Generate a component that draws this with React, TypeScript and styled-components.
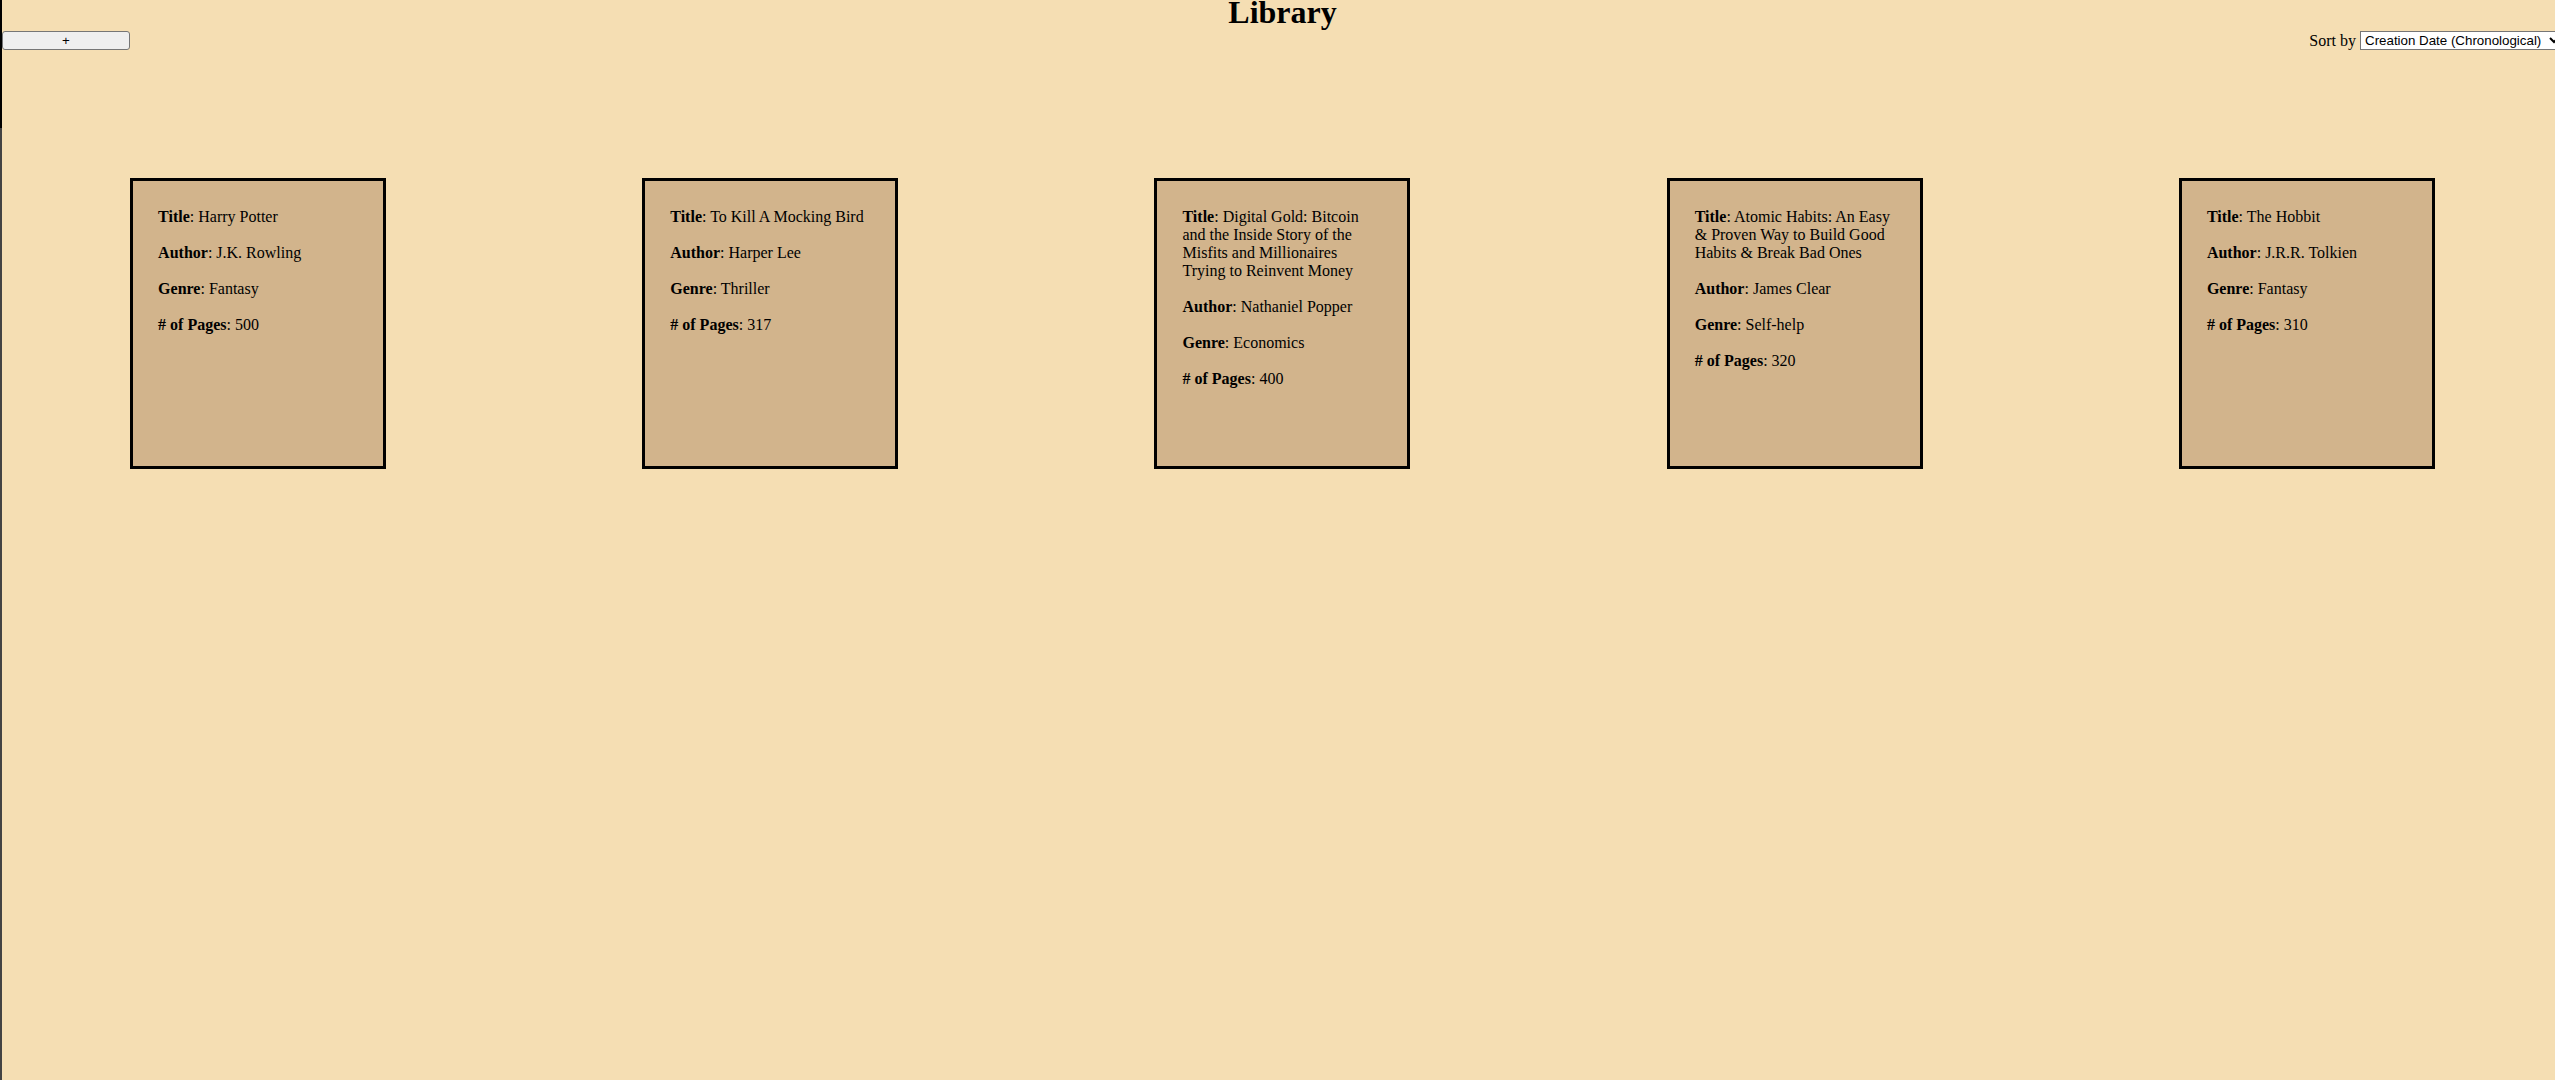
import React from "react";
import styled, { createGlobalStyle } from "styled-components";

const GlobalStyle = createGlobalStyle`
  html, body {
    margin: 0;
    padding: 0;
    overflow: hidden;
    background: #f5deb3;
  }
  body {
    font-family: "Liberation Serif", "Times New Roman", serif;
    font-size: 16px;
    color: #000;
  }
`;

const Page = styled.div`
  display: flex;
  flex-direction: row;
  min-height: 100vh;
  width: 2563px;
  background: #f5deb3;
`;

const Edge = styled.div`
  flex: 0 0 2px;
  width: 2px;
  background: linear-gradient(to bottom, #000 0, #000 128px, #434343 128px, #434343 100%);
`;

const Main = styled.main`
  flex: 0 0 2561px;
  width: 2561px;
  display: flex;
  flex-direction: column;
`;

const Heading = styled.h1`
  margin: 0 0 7px;
  font-family: "Liberation Serif", "Times New Roman", serif;
  font-size: 32px;
  font-weight: bold;
  line-height: 24px;
  text-align: center;
`;

const Toolbar = styled.div`
  display: flex;
  align-items: center;
  justify-content: space-between;
  height: 19px;
`;

const AddButton = styled.button`
  width: 128px;
  height: 19px;
  padding: 0;
  box-sizing: border-box;
  background: #efefef;
  border: 1px solid #767676;
  border-radius: 3px;
  font-family: "Liberation Sans", Arial, sans-serif;
  font-size: 13.33px;
  color: #000;
  line-height: 15px;
`;

const SortGroup = styled.label`
  display: flex;
  align-items: center;
  gap: 4px;
  font-family: "Liberation Serif", "Times New Roman", serif;
  font-size: 16px;
`;

const SortSelect = styled.select`
  width: 203px;
  height: 19px;
  font-family: "Liberation Sans", Arial, sans-serif;
  font-size: 13.33px;
  color: #000;
  background: #fff;
`;

const CardRow = styled.section`
  display: grid;
  grid-template-columns: repeat(5, 1fr);
  justify-items: center;
  margin-top: 128px;
`;

const Card = styled.article`
  width: 200px;
  height: 234px;
  padding: 27px 25px 24px;
  border: 3px solid #000;
  background: #d2b48c;
  display: flex;
  flex-direction: column;
  gap: 18px;
`;

const Field = styled.p`
  margin: 0;
  line-height: 18px;
  font-size: 16px;
`;

type Book = { title: string; author: string; genre: string; pages: number };

const books: Book[] = [
  { title: "Harry Potter", author: "J.K. Rowling", genre: "Fantasy", pages: 500 },
  { title: "To Kill A Mocking Bird", author: "Harper Lee", genre: "Thriller", pages: 317 },
  {
    title: "Digital Gold: Bitcoin and the Inside Story of the Misfits and Millionaires Trying to Reinvent Money",
    author: "Nathaniel Popper",
    genre: "Economics",
    pages: 400,
  },
  {
    title: "Atomic Habits: An Easy & Proven Way to Build Good Habits & Break Bad Ones",
    author: "James Clear",
    genre: "Self-help",
    pages: 320,
  },
  { title: "The Hobbit", author: "J.R.R. Tolkien", genre: "Fantasy", pages: 310 },
];

export default function App() {
  return (
    <>
      <GlobalStyle />
      <Page>
        <Edge />
        <Main>
          <Heading>Library</Heading>
          <Toolbar>
            <AddButton type="button">+</AddButton>
            <SortGroup>
              Sort by
              <SortSelect defaultValue="chrono">
                <option value="chrono">Creation Date (Chronological)</option>
                <option value="rev">Creation Date (Reverse)</option>
                <option value="title">Title</option>
              </SortSelect>
            </SortGroup>
          </Toolbar>
          <CardRow>
            {books.map((b) => (
              <Card key={b.title}>
                <Field>
                  <b>Title</b>: {b.title}
                </Field>
                <Field>
                  <b>Author</b>: {b.author}
                </Field>
                <Field>
                  <b>Genre</b>: {b.genre}
                </Field>
                <Field>
                  <b># of Pages</b>: {b.pages}
                </Field>
              </Card>
            ))}
          </CardRow>
        </Main>
      </Page>
    </>
  );
}
